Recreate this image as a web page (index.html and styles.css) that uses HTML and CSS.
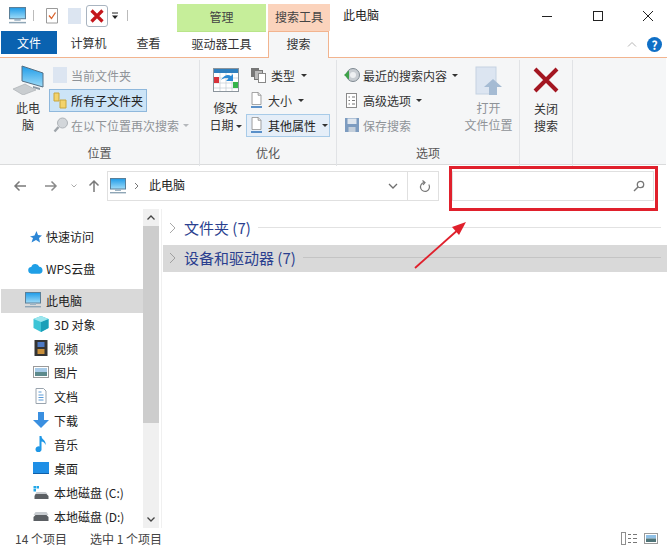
FILE: index.html
```html
<!DOCTYPE html>
<html lang="zh-CN">
<head>
    <meta charset="UTF-8">
    <title>此电脑</title>
    <link rel="stylesheet" href="styles.css">
</head>
<body>
<svg class="defs" width="0" height="0">
    <defs>
        <linearGradient id="screen" x1="0" y1="0" x2="0" y2="1"><stop offset="0" stop-color="#1e9be8"/><stop offset="1" stop-color="#9fdcf8"/></linearGradient>
        <symbol id="pc" viewBox="0 0 16 16">
            <rect x="0.5" y="0.5" width="15" height="10.5" fill="url(#screen)" stroke="#5a7f98"/>
            <rect x="5" y="11" width="6" height="2" fill="#9db4c4"/>
            <rect x="0" y="14" width="16" height="1.4" fill="#8fa6b6"/>
        </symbol>
        <symbol id="doc" viewBox="0 0 16 16">
            <path d="M2.5 .5H10L13.5 4V15.5H2.5Z" fill="#fff" stroke="#8a8a8a"/>
            <path d="M10 .5V4H13.5" fill="#eee" stroke="#8a8a8a"/>
        </symbol>
    </defs>
</svg>
<div class="window">
    <div class="titlebar">
        <div class="qat">
            <svg class="qat-pc" width="17" height="17"><use href="#pc"/></svg>
            <span class="qat-sep"></span>
            <svg class="qat-check" width="14" height="17" viewBox="0 0 14 17">
                <path d="M1.500 1.500H12.500V16H1.500Z" fill="#fff" stroke="#9a9a9a"/>
                <path d="M4 8.500L6.500 11.500L10.500 5.500" fill="none" stroke="#d9622b" stroke-width="1.300"/>
            </svg>
            <span class="qat-blank"></span>
            <span class="qat-x">
                <svg width="16" height="16" viewBox="0 0 16 16"><path d="M2.500 2.500L13.500 13.500M13.500 2.500L2.500 13.500" stroke="#c4161c" stroke-width="3.200"/></svg>
            </span>
            <svg class="qat-more" width="8" height="8" viewBox="0 0 8 8"><path d="M1 1H7" stroke="#222"/><path d="M1 3.500H7L4 7Z" fill="#222"/></svg>
            <span class="qat-sep last"></span>
        </div>
        <div class="tool-head green">管理</div>
        <div class="tool-head peach">搜索工具</div>
        <div class="win-title">此电脑</div>
        <div class="win-btns">
            <svg width="12" height="12" viewBox="0 0 12 12"><path d="M1 6.500H11" stroke="#222"/></svg>
            <svg width="12" height="12" viewBox="0 0 12 12"><rect x="1.500" y="1.500" width="9" height="9" fill="none" stroke="#222"/></svg>
            <svg width="12" height="12" viewBox="0 0 12 12"><path d="M1 1L11 11M11 1L1 11" stroke="#222"/></svg>
        </div>
    </div>

    <div class="tabbar">
        <div class="tab file">文件</div>
        <div class="tab comp">计算机</div>
        <div class="tab view">查看</div>
        <div class="tab drive">驱动器工具</div>
        <div class="tab search">搜索</div>
        <div class="tab-end">
            <svg width="10" height="6" viewBox="0 0 10 6"><path d="M1 5.500L5 1.500L9 5.500" fill="none" stroke="#b5b5b5"/></svg>
            <span class="help">?</span>
        </div>
    </div>

    <div class="ribbon">
        <section class="group g-loc">
            <div class="group-body">
                <div class="big big-pc">
                    <svg width="32" height="30" viewBox="0 0 32 30">
                        <path d="M10 1L31 8V22L10 16Z" fill="url(#screen)" stroke="#546f84"/>
                        <path d="M21 21L28 23V25L21 23Z" fill="#8a98a4"/>
                        <path d="M1 24L13 19L24 25L11 30Z" fill="#c9cdd0" stroke="#a5a9ad" stroke-width=".6"/>
                    </svg>
                    <span>此电<br>脑</span>
                </div>
                <div class="col col-loc">
                    <div class="small off">
                        <span class="ic-blank"></span>当前文件夹
                    </div>
                    <div class="small on">
                        <svg width="14" height="17" viewBox="0 0 14 17">
                            <path d="M1 1H6V9H1Z" fill="#f3d36b" stroke="#c9a63c"/>
                            <path d="M7 8H13V16H7Z" fill="#f3d36b" stroke="#c9a63c"/>
                        </svg>
                        <span>所有子文件夹</span>
                    </div>
                    <div class="small off again">
                        <svg width="16" height="16" viewBox="0 0 16 16">
                            <circle cx="9.500" cy="6" r="5" fill="#d2d6da" stroke="#aeb3b8"/>
                            <path d="M5.500 10L1.500 14.500" stroke="#9ea4aa" stroke-width="2.400"/>
                        </svg>
                        <span>在以下位置再次搜索</span><i class="caret light"></i>
                    </div>
                </div>
            </div>
            <div class="group-label">位置</div>
        </section>

        <section class="group g-opt">
            <div class="group-body">
                <div class="big big-date">
                    <svg width="26" height="24" viewBox="0 0 26 24">
                        <rect x=".5" y=".5" width="25" height="23" fill="#fff" stroke="#8b949c"/>
                        <rect x="1" y="1" width="24" height="4" fill="#2f7fbe"/>
                        <path d="M1 10H25M1 15H25M1 20H25M7 5V23M13 5V23M19 5V23" stroke="#c3cbd2" stroke-width=".7"/>
                        <rect x="1" y="9" width="5" height="6" fill="#d8323a"/>
                        <rect x="20" y="14" width="5" height="6" fill="#35b44a"/>
                        <path d="M8 12C11 7 15 6 18 8L20 6V13H13L15.500 10.500C13 9.500 11 10 8 12Z" fill="#2d8ad4"/>
                    </svg>
                    <span>修改<br>日期<i class="caret"></i></span>
                </div>
                <div class="col col-opt">
                    <div class="small">
                        <svg width="17" height="16" viewBox="0 0 17 16">
                            <rect x="1" y="1" width="8" height="9" fill="#777"/>
                            <rect x="4.500" y="3.500" width="8" height="9" fill="#bbb" stroke="#777"/>
                            <rect x="8.500" y="6.500" width="7" height="9" fill="#fff" stroke="#888"/>
                        </svg>
                        <span>类型</span><i class="caret"></i>
                    </div>
                    <div class="small">
                        <svg width="14" height="17" viewBox="0 0 14 17">
                            <use href="#doc" width="13" height="13"/>
                            <path d="M1 15H12" stroke="#2a6fb8" stroke-width="1.500"/>
                        </svg>
                        <span>大小</span><i class="caret"></i>
                    </div>
                    <div class="small on wide">
                        <svg width="14" height="17" viewBox="0 0 14 17">
                            <use href="#doc" width="13" height="13"/>
                            <path d="M1 15H12" stroke="#2a6fb8" stroke-width="1.500"/>
                        </svg>
                        <span>其他属性</span><i class="caret"></i>
                    </div>
                </div>
            </div>
            <div class="group-label">优化</div>
        </section>

        <section class="group g-sel">
            <div class="group-body">
                <div class="col col-sel">
                    <div class="small">
                        <svg width="16" height="16" viewBox="0 0 16 16">
                            <circle cx="9" cy="8" r="6.500" fill="#c8cdd2" stroke="#7f8a92"/>
                            <circle cx="9" cy="8" r="3" fill="#eef0f2"/>
                            <path d="M0 8L5 3.500V12.500Z" fill="#3fa34a"/>
                        </svg>
                        <span>最近的搜索内容</span><i class="caret"></i>
                    </div>
                    <div class="small">
                        <svg width="16" height="17" viewBox="0 0 14 17">
                            <rect x="1.500" y="1.500" width="10" height="14" fill="#fff" stroke="#8a8a8a"/>
                            <path d="M3.500 5H5M7 5H10M3.500 8.500H5M7 8.500H10M3.500 12H5M7 12H10" stroke="#777"/>
                        </svg>
                        <span>高级选项</span><i class="caret"></i>
                    </div>
                    <div class="small off">
                        <svg width="16" height="16" viewBox="0 0 16 16">
                            <path d="M1 1H15V15H1Z" fill="#7d9cc0"/>
                            <rect x="3.500" y="1.500" width="9" height="5.500" fill="#dfe6ee"/>
                            <rect x="4.500" y="10" width="7" height="5" fill="#c4cfdb"/>
                        </svg>
                        <span>保存搜索</span>
                    </div>
                </div>
                <div class="big big-open off">
                    <svg width="28" height="30" viewBox="0 0 28 30">
                        <rect x="1" y="1" width="20" height="27" fill="#dce5f1" stroke="#c5d2e2"/>
                        <path d="M18 13L27 21H22V29H14V21H9Z" fill="#a5bbd3"/>
                    </svg>
                    <span>打开<br>文件位置</span>
                </div>
            </div>
            <div class="group-label">选项</div>
        </section>

        <section class="group g-close">
            <div class="group-body">
                <div class="big big-close">
                    <svg width="26" height="26" viewBox="0 0 26 26"><path d="M2 2L24 24M24 2L2 24" stroke="#a31621" stroke-width="4"/></svg>
                    <span>关闭<br>搜索</span>
                </div>
            </div>
        </section>
    </div>

    <div class="navbar">
        <div class="nav-arrows">
            <svg width="14" height="12" viewBox="0 0 14 12"><path d="M13 6H2M6.500 1.500L2 6L6.500 10.500" fill="none" stroke="#7a7a7a" stroke-width="1.500"/></svg>
            <svg class="fwd" width="14" height="12" viewBox="0 0 14 12"><path d="M1 6H12M7.500 1.500L12 6L7.500 10.500" fill="none" stroke="#8a8a8a" stroke-width="1.500"/></svg>
            <svg class="rec" width="6" height="4" viewBox="0 0 6 4"><path d="M.5 .5L3 3L5.500 .5" fill="none" stroke="#aaa"/></svg>
            <svg class="up" width="12" height="14" viewBox="0 0 12 14"><path d="M6 13V2M1.500 6.500L6 2L10.500 6.500" fill="none" stroke="#7a7a7a" stroke-width="1.500"/></svg>
        </div>
        <div class="address">
            <svg width="16" height="16"><use href="#pc"/></svg>
            <svg class="crumb" width="5" height="8" viewBox="0 0 5 8"><path d="M1 1L4 4L1 7" fill="none" stroke="#777"/></svg>
            <span class="addr-text">此电脑</span>
            <svg class="addr-down" width="10" height="6" viewBox="0 0 10 6"><path d="M1 1L5 5L9 1" fill="none" stroke="#6f6f6f" stroke-width="1.300"/></svg>
            <span class="addr-refresh">
                <svg width="12" height="13" viewBox="0 0 12 13"><path d="M5 2.500A4.500 4.500 0 1 0 9.800 4.500M3.500 .5L6 2.500L4 5" fill="none" stroke="#777" stroke-width="1.200"/></svg>
            </span>
        </div>
        <div class="searchbox">
            <svg width="12" height="12" viewBox="0 0 12 12"><circle cx="7.500" cy="4.500" r="3.200" fill="none" stroke="#777" stroke-width="1.300"/><path d="M5 7L1 11" stroke="#777" stroke-width="1.500"/></svg>
        </div>
    </div>

    <div class="main">
        <nav class="sidebar">
            <ul class="tree">
                <li class="root">
                    <svg class="i-root" width="13" height="13" viewBox="0 0 13 13"><path d="M7.500 1L9 5L13 5.500L10 8L11 12.500L7 10L2.500 12.500L4 8L1 6.500L5.500 5.500Z" fill="#2c86d6"/></svg>
                    快速访问
                </li>
                <li class="root">
                    <svg class="i-root" width="16" height="11" viewBox="0 0 16 11"><path d="M4 11A3.500 3.500 0 0 1 3.500 4 4.500 4.500 0 0 1 12 3.500 3.800 3.800 0 0 1 12.500 11Z" fill="#1f9fe6"/></svg>
                    WPS云盘
                </li>
                <li class="root current">
                    <svg class="i-pc" width="16" height="16"><use href="#pc"/></svg>
                    此电脑
                </li>
                <li class="child">
                    <svg width="15" height="16" viewBox="0 0 15 16"><path d="M7.500 0L15 3V12L7.500 16L0 12V3Z" fill="#3cc4d6"/><path d="M7.500 6L15 3V12L7.500 16Z" fill="#1a9fb8"/><path d="M7.500 0L15 3L7.500 6L0 3Z" fill="#9be6ee"/></svg>
                    3D 对象
                </li>
                <li class="child">
                    <svg width="15" height="16" viewBox="0 0 15 16"><rect x="1" width="13" height="16" fill="#333"/><rect x="4" y="2" width="7" height="5" fill="#4b78c4"/><rect x="4" y="9" width="7" height="5" fill="#c98f3a"/></svg>
                    视频
                </li>
                <li class="child">
                    <svg width="16" height="12" viewBox="0 0 16 12"><rect x=".5" y=".5" width="15" height="11" fill="#fff" stroke="#9a9a9a"/><rect x="2" y="2" width="12" height="4" fill="#a8cbe8"/><rect x="2" y="6" width="12" height="4" fill="#5d8a8c"/></svg>
                    图片
                </li>
                <li class="child">
                    <svg width="15" height="16" viewBox="0 0 15 16"><path d="M2.500 .5H10L12.500 3V15.500H2.500Z" fill="#fff" stroke="#9aa4ae"/><path d="M5 4H8M5 7H10M5 9.500H10M5 12H10" stroke="#5a9ad6"/></svg>
                    文档
                </li>
                <li class="child">
                    <svg width="16" height="16" viewBox="0 0 16 16"><path d="M5 0H11V8H16L8 16L0 8H5Z" fill="#3a8fe0"/></svg>
                    下载
                </li>
                <li class="child">
                    <svg width="15" height="16" viewBox="0 0 15 16"><path d="M6 0H8C8 4 13 4 12 9C11 6 9.500 6 8 5.500V13A3 3 0 1 1 6 10.500Z" fill="#1f97e6"/></svg>
                    音乐
                </li>
                <li class="child">
                    <svg width="16" height="12" viewBox="0 0 16 12"><rect width="16" height="12" fill="#1f8fe6"/><rect y="11" width="16" height="1" fill="#0f5fa8"/></svg>
                    桌面
                </li>
                <li class="child">
                    <svg width="15" height="13" viewBox="0 0 15 13"><rect y="0" width="2.500" height="2.500" fill="#22a7e8"/><rect x="3" y="0" width="2.500" height="2.500" fill="#22a7e8"/><rect y="3" width="2.500" height="2.500" fill="#22a7e8"/><path d="M2 8H13L15 10V13H1V10Z" fill="#5b5f63"/><path d="M3 6H12L14 8H2Z" fill="#c8ccd0"/></svg>
                    本地磁盘 (C:)
                </li>
                <li class="child">
                    <svg width="15" height="9" viewBox="0 0 15 9"><path d="M2 3H13L15 5V9H0V5Z" fill="#5b5f63"/><path d="M2 0H13L15 3H0Z" fill="#c8ccd0"/></svg>
                    本地磁盘 (D:)
                </li>
            </ul>
        </nav>
        <div class="scrollbar">
            <span class="sb-btn"><svg width="8" height="5" viewBox="0 0 8 5"><path d="M.5 4.500L4 1L7.500 4.500" fill="none" stroke="#444" stroke-width="1.300"/></svg></span>
            <span class="sb-thumb"></span>
            <span class="sb-btn down"><svg width="8" height="5" viewBox="0 0 8 5"><path d="M.5 .5L4 4L7.500 .5" fill="none" stroke="#444" stroke-width="1.300"/></svg></span>
        </div>
        <div class="content">
            <div class="section">
                <svg width="7" height="12" viewBox="0 0 7 12"><path d="M1 1L6 6L1 11" fill="none" stroke="#a8a8a8"/></svg>
                <span>文件夹 (7)</span><i class="rule"></i>
            </div>
            <div class="section focus">
                <svg width="7" height="12" viewBox="0 0 7 12"><path d="M1 1L6 6L1 11" fill="none" stroke="#a0a0a0"/></svg>
                <span>设备和驱动器 (7)</span><i class="rule"></i>
            </div>
        </div>
    </div>

    <div class="statusbar">
        <span class="st-count">14 个项目</span>
        <span class="st-sel">选中 1 个项目</span>
        <div class="st-views">
            <svg width="16" height="13" viewBox="0 0 16 13"><rect x=".5" y=".5" width="4" height="12" fill="#fff" stroke="#8f8f8f"/><path d="M7 2.500H10M12 2.500H16M7 6.500H10M12 6.500H16M7 10.500H10M12 10.500H16" stroke="#777"/></svg>
            <svg width="14" height="11" viewBox="0 0 14 11"><rect x=".5" y=".5" width="13" height="10" fill="#fff" stroke="#9a9a9a"/><rect x="2" y="2" width="10" height="3.500" fill="#8fc0e6"/><rect x="2" y="5.500" width="10" height="3.500" fill="#4f7478"/></svg>
        </div>
    </div>

    <!-- red annotation over the screenshot -->
    <div class="mark-box"></div>
    <svg class="mark-arrow" width="56" height="50" viewBox="0 0 56 50">
        <path d="M2 48L47 8" stroke="#e0202c" stroke-width="1.800"/>
        <path d="M53 2L46 15L39 7Z" fill="#e0202c"/>
    </svg>
</div>
</body>
</html>
```

FILE: styles.css
```css
* {
    box-sizing: border-box;
}

html, body {
    margin: 0;
    padding: 0;
    background: #fff;
}

body {
    font-family: "Noto Sans CJK SC", "Noto Sans", sans-serif;
    font-size: 12px;
    color: #222;
}

svg {
    display: block;
    flex: none;
}

.defs {
    position: absolute;
}

.window {
    position: relative;
    width: 667px;
    height: 552px;
    overflow: hidden;
    display: flex;
    flex-direction: column;
}

/* title bar */
.titlebar {
    height: 31px;
    display: flex;
    padding-top: 4px;
}

.qat {
    width: 177px;
    height: 23px;
    padding-left: 9px;
    display: flex;
    align-items: center;
}

.qat-sep {
    width: 1px;
    height: 11px;
    margin-left: 7px;
    background: #bbb;
}

.qat-sep.last {
    margin-left: 8px;
}

.qat-check {
    margin-left: 11px;
}

.qat-blank {
    width: 13px;
    height: 16px;
    margin-left: 9px;
    background: #dce5f1;
}

.qat-x {
    width: 22px;
    height: 22px;
    margin-left: 5px;
    border: 1px solid #a9b4c0;
    border-radius: 3px;
    display: flex;
    align-items: center;
    justify-content: center;
}

.qat-more {
    margin-left: 3px;
}

.tool-head {
    height: 27px;
    padding-bottom: 2px;
    display: flex;
    align-items: center;
    justify-content: center;
    color: #444;
}

.tool-head.green {
    width: 89px;
    margin-right: 2px;
    background: #c6ee9a;
}

.tool-head.peach {
    width: 62px;
    background: #fbd3bc;
}

.win-title {
    margin-left: 13px;
    height: 23px;
    line-height: 21px;
    color: #222;
}

.win-btns {
    margin-left: auto;
    width: 113px;
    margin-right: 13px;
    height: 23px;
    display: flex;
    align-items: center;
    justify-content: space-between;
}

/* tabs */
.tabbar {
    height: 27px;
    padding-left: 1px;
    display: flex;
    border-bottom: 1px solid #f2b48f;
    flex: none;
}

.tab {
    height: 26px;
    padding-bottom: 3px;
    display: flex;
    align-items: center;
    justify-content: center;
    color: #333;
}

.tab.file {
    width: 56px;
    height: 23px;
    padding-bottom: 1px;
    background: #0a62b0;
    color: #fff;
}

.tab.comp {
    width: 63px;
}

.tab.view {
    width: 57px;
}

.tab.drive {
    width: 89px;
    background: #fff;
    border-top: 1px solid #b9e58a;
}

.tab.search {
    width: 61px;
    height: 27px;
    margin-left: 2px;
    background: #f5f6f7;
    border: 1px solid #f2b48f;
    border-bottom: 0;
}

.tab-end {
    margin-left: auto;
    padding-right: 5px;
    display: flex;
    align-items: center;
    gap: 10px;
    height: 26px;
}

.help {
    width: 15px;
    height: 15px;
    border-radius: 50%;
    background: #0f6fc6;
    color: #fff;
    font-size: 12px;
    font-weight: 700;
    line-height: 15px;
    text-align: center;
}

/* ribbon */
.ribbon {
    width: 666px;
    height: 107px;
    flex: none;
    background: #f5f6f7;
    border-bottom: 1px solid #dadbdc;
    display: flex;
}

.group {
    height: 106px;
    display: flex;
    flex-direction: column;
    border-right: 1px solid #e1e3e6;
    margin-top: 2px;
}

.group-body {
    height: 84px;
    display: flex;
}

.group-label {
    height: 18px;
    line-height: 18px;
    text-align: center;
    color: #555;
}

.g-loc {
    width: 200px;
}

.g-opt {
    width: 137px;
}

.g-sel {
    width: 183px;
}

.g-close {
    width: 53px;
}

.big {
    display: flex;
    flex-direction: column;
    align-items: center;
    text-align: center;
    line-height: 17px;
    color: #333;
}

.big span {
    display: block;
}

.big-pc {
    width: 49px;
    padding: 5px 0 0 7px;
}

.big-pc span {
    margin-top: 4px;
}

.big-date {
    width: 46px;
    padding: 8px 0 0 5px;
}

.big-date span {
    margin-top: 7px;
}

.big-open {
    width: 64px;
    margin-left: 3px;
    padding-top: 6px;
}

.big-open span {
    margin-top: 3px;
}

.big-close {
    width: 52px;
    padding-top: 7px;
}

.big-close span {
    margin-top: 7px;
}

.col {
    padding-top: 3px;
    display: flex;
    flex-direction: column;
}

.col-sel {
    width: 118px;
    padding-left: 3px;
}

.small {
    height: 25px;
    padding-left: 4px;
    padding-bottom: 1px;
    display: flex;
    align-items: center;
    gap: 4px;
    white-space: nowrap;
    color: #333;
}

.col-sel .small {
    gap: 3px;
}

.small.again {
    gap: 2px;
}

.small.on {
    height: 23px;
    margin: 1px 0;
    padding-left: 3px;
    background: #cce4f7;
    border: 1px solid #8fb8dc;
    width: 98px;
    color: #222;
}

.small.on.wide {
    width: 84px;
    background: #e5eef8;
    border-color: #a8cbe8;
    padding-left: 3px;
}

.off,
.small.off {
    color: #8f9398;
}

.ic-blank {
    width: 14px;
    height: 16px;
    background: #dce5f1;
}

.caret {
    display: inline-block;
    width: 0;
    height: 0;
    margin-left: 2px;
    vertical-align: middle;
    border-left: 3px solid transparent;
    border-right: 3px solid transparent;
    border-top: 3px solid #333;
}

.caret.light {
    border-top-color: #b5b8bc;
}

/* address row */
.navbar {
    height: 44px;
    flex: none;
    padding-top: 6px;
    display: flex;
    align-items: flex-start;
}

.nav-arrows {
    width: 107px;
    height: 30px;
    padding-left: 13px;
    display: flex;
    align-items: center;
}

.nav-arrows .fwd {
    margin-left: 17px;
}

.nav-arrows .rec {
    margin-left: 13px;
}

.nav-arrows .up {
    margin-left: 11px;
}

.address {
    width: 332px;
    height: 30px;
    border: 1px solid #e0e0e0;
    display: flex;
    align-items: center;
    padding-left: 2px;
    background: #fff;
}

.crumb {
    margin-left: 8px;
}

.addr-text {
    margin-left: 10px;
    margin-bottom: 3px;
}

.addr-down {
    margin-left: auto;
    margin-right: 9px;
}

.addr-refresh {
    width: 31px;
    height: 28px;
    padding-left: 3px;
    border-left: 1px solid #e0e0e0;
    display: flex;
    align-items: center;
    justify-content: center;
}

.searchbox {
    width: 202px;
    height: 30px;
    margin-left: 13px;
    border: 1px solid #e0e0e0;
    display: flex;
    align-items: center;
    justify-content: flex-end;
    padding-right: 8px;
}

/* main area */
.main {
    height: 319px;
    flex: none;
    display: flex;
}

.sidebar {
    width: 143px;
    height: 319px;
    padding-left: 1px;
    overflow: hidden;
}

.tree {
    list-style: none;
    margin: 0;
    padding: 16px 0 0;
}

.tree li {
    height: 24px;
    padding-bottom: 2px;
    display: flex;
    align-items: center;
    white-space: nowrap;
    color: #222;
}

.tree .root {
    margin-bottom: 8px;
    padding-left: 27px;
}

.tree .root .i-root {
    margin-right: 3px;
    width: 15px;
}

.tree .current {
    margin-bottom: 0;
    padding-left: 24px;
    background: #d9d9d9;
}

.i-pc {
    margin-right: 5px;
}

.tree .child {
    padding-left: 32px;
}

.tree .child svg {
    width: 16px;
    margin-right: 5px;
}

.scrollbar {
    width: 16px;
    height: 319px;
    background: #f0f0f0;
    display: flex;
    flex-direction: column;
}

.sb-btn {
    height: 17px;
    display: flex;
    align-items: center;
    justify-content: center;
}

.sb-thumb {
    height: 197px;
    background: #cdcdcd;
}

.sb-btn.down {
    margin-top: auto;
}

.content {
    flex: 1;
    margin-left: 2px;
    border-left: 1px solid #f0f0f0;
    padding-top: 9px;
    padding-left: 1px;
}

.section {
    height: 22px;
    margin-bottom: 5px;
    padding: 0 6px 3px 6px;
    display: flex;
    align-items: center;
    color: #2a3f8f;
    font-size: 15px;
}

.section span {
    margin-left: 8px;
    white-space: nowrap;
}

.section.focus {
    height: 27px;
    padding-bottom: 2px;
    background: #d9d9d9;
}

.rule {
    flex: 1;
    height: 1px;
    margin-left: 7px;
    background: #e2e2e2;
}

.section.focus .rule {
    background: #c4c4c4;
}

/* status bar */
.statusbar {
    height: 24px;
    flex: 1;
    padding-bottom: 4px;
    display: flex;
    align-items: center;
    color: #444;
}

.st-count {
    width: 80px;
    margin-left: 15px;
}

.st-sel {
    margin-left: -5px;
}

.st-views {
    margin-left: auto;
    margin-right: 9px;
    display: flex;
    align-items: center;
    gap: 7px;
}

/* annotation */
.mark-box {
    position: absolute;
    left: 449px;
    top: 166px;
    width: 209px;
    height: 45px;
    border: 3px solid #e0202c;
}

.mark-arrow {
    position: absolute;
    left: 413px;
    top: 220px;
}
```
